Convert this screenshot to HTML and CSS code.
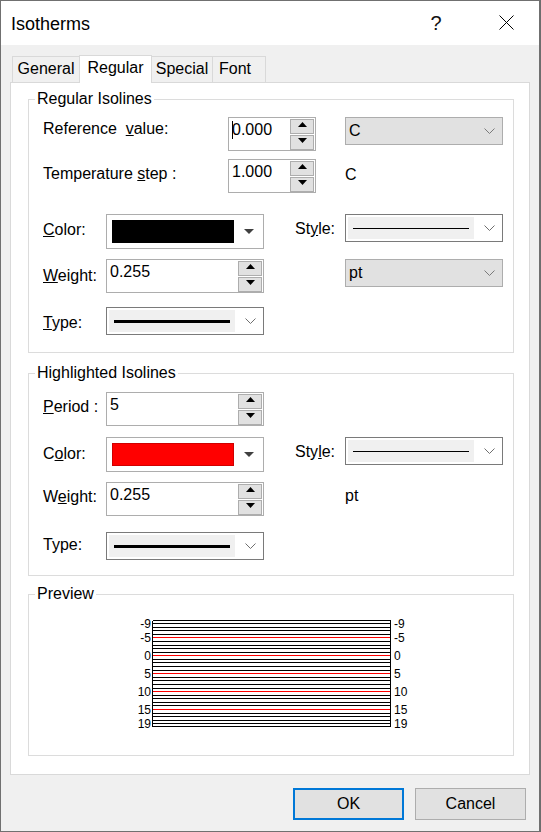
FILE: index.html
```html
<!DOCTYPE html>
<html>
<head>
<meta charset="utf-8">
<title>Isotherms</title>
<link rel="stylesheet" href="styles.css">
</head>
<body>
<div class="window">
  <div class="titlebar">
    <div class="title">Isotherms</div>
    <div class="help">?</div>
    <div class="close"><svg width="15" height="15" viewBox="0 0 15 15"><path d="M0.5 0.5 L14.5 14.5 M14.5 0.5 L0.5 14.5" stroke="#000" stroke-width="1" fill="none"/></svg></div>
  </div>
  <div class="body">
    <div class="tabs">
      <div class="tab">General</div>
      <div class="tab active">Regular</div>
      <div class="tab">Special</div>
      <div class="tab tab-font">Font</div>
    </div>
    <div class="panel">
      <!-- Regular Isolines -->
      <div class="group g1">
        <div class="group-title">Regular Isolines</div>
        <div class="row mt9">
          <div class="lbl lbl-wide o3">Reference&nbsp; <u>v</u>alue:</div>
          <div class="spin narrow">
            <div class="val"><span class="caret"></span>0.000</div>
            <div class="btns">
              <div class="sbtn"><svg width="9" height="5" viewBox="0 0 9 5"><polygon points="0,5 4.5,0 9,5" fill="#000"/></svg></div>
              <div class="sbtn"><svg width="9" height="5" viewBox="0 0 9 5"><polygon points="0,0 9,0 4.5,5" fill="#000"/></svg></div>
            </div>
          </div>
          <div class="dcombo after-narrow"><span>C</span><svg class="chev" width="11" height="6" viewBox="0 0 11 6"><polyline points="0.5,0.5 5.5,5.5 10.5,0.5" fill="none" stroke="#7a7a7a" stroke-width="1"/></svg></div>
        </div>
        <div class="row mt8">
          <div class="lbl lbl-wide o6">Temperature <u>s</u>tep :</div>
          <div class="spin narrow">
            <div class="val">1.000</div>
            <div class="btns">
              <div class="sbtn"><svg width="9" height="5" viewBox="0 0 9 5"><polygon points="0,5 4.5,0 9,5" fill="#000"/></svg></div>
              <div class="sbtn"><svg width="9" height="5" viewBox="0 0 9 5"><polygon points="0,0 9,0 4.5,5" fill="#000"/></svg></div>
            </div>
          </div>
          <div class="unit after-narrow o7">C</div>
        </div>
        <div class="row mt21">
          <div class="lbl o7"><u>C</u>olor:</div>
          <div class="colorbox">
            <div class="swatch black"></div>
            <div class="carrow"><svg width="10" height="5" viewBox="0 0 10 5"><polygon points="0,0 10,0 5,5" fill="#404040"/></svg></div>
          </div>
          <div class="lbl2 o6">St<u>y</u>le:</div>
          <div class="combo wide">
            <div class="linebox"><div class="ln thin"></div></div>
            <div class="chevbox"><svg width="11" height="6" viewBox="0 0 11 6"><polyline points="0.5,0.5 5.5,5.5 10.5,0.5" fill="none" stroke="#6e6e6e" stroke-width="1"/></svg></div>
          </div>
        </div>
        <div class="row mt10">
          <div class="lbl o8"><u>W</u>eight:</div>
          <div class="spin">
            <div class="val">0.255</div>
            <div class="btns">
              <div class="sbtn"><svg width="9" height="5" viewBox="0 0 9 5"><polygon points="0,5 4.5,0 9,5" fill="#000"/></svg></div>
              <div class="sbtn"><svg width="9" height="5" viewBox="0 0 9 5"><polygon points="0,0 9,0 4.5,5" fill="#000"/></svg></div>
            </div>
          </div>
          <div class="dcombo after-field"><span>pt</span><svg class="chev" width="11" height="6" viewBox="0 0 11 6"><polyline points="0.5,0.5 5.5,5.5 10.5,0.5" fill="none" stroke="#7a7a7a" stroke-width="1"/></svg></div>
        </div>
        <div class="row mt14">
          <div class="lbl o7"><u>T</u>ype:</div>
          <div class="combo">
            <div class="linebox"><div class="ln thick"></div></div>
            <div class="chevbox"><svg width="11" height="6" viewBox="0 0 11 6"><polyline points="0.5,0.5 5.5,5.5 10.5,0.5" fill="none" stroke="#6e6e6e" stroke-width="1"/></svg></div>
          </div>
        </div>
      </div>

      <!-- Highlighted Isolines -->
      <div class="group g2">
        <div class="group-title">Highlighted Isolines</div>
        <div class="row mt10">
          <div class="lbl o6"><u>P</u>eriod :</div>
          <div class="spin">
            <div class="val">5</div>
            <div class="btns">
              <div class="sbtn"><svg width="9" height="5" viewBox="0 0 9 5"><polygon points="0,5 4.5,0 9,5" fill="#000"/></svg></div>
              <div class="sbtn"><svg width="9" height="5" viewBox="0 0 9 5"><polygon points="0,0 9,0 4.5,5" fill="#000"/></svg></div>
            </div>
          </div>
        </div>
        <div class="row mt11">
          <div class="lbl o8">C<u>o</u>lor:</div>
          <div class="colorbox">
            <div class="swatch red"></div>
            <div class="carrow"><svg width="10" height="5" viewBox="0 0 10 5"><polygon points="0,0 10,0 5,5" fill="#404040"/></svg></div>
          </div>
          <div class="lbl2 o6">Sty<u>l</u>e:</div>
          <div class="combo wide">
            <div class="linebox"><div class="ln thin"></div></div>
            <div class="chevbox"><svg width="11" height="6" viewBox="0 0 11 6"><polyline points="0.5,0.5 5.5,5.5 10.5,0.5" fill="none" stroke="#6e6e6e" stroke-width="1"/></svg></div>
          </div>
        </div>
        <div class="row mt10">
          <div class="lbl o6">W<u>e</u>ight:</div>
          <div class="spin">
            <div class="val">0.255</div>
            <div class="btns">
              <div class="sbtn"><svg width="9" height="5" viewBox="0 0 9 5"><polygon points="0,5 4.5,0 9,5" fill="#000"/></svg></div>
              <div class="sbtn"><svg width="9" height="5" viewBox="0 0 9 5"><polygon points="0,0 9,0 4.5,5" fill="#000"/></svg></div>
            </div>
          </div>
          <div class="unit after-field o5">pt</div>
        </div>
        <div class="row mt16">
          <div class="lbl o4">Type:</div>
          <div class="combo">
            <div class="linebox"><div class="ln thick"></div></div>
            <div class="chevbox"><svg width="11" height="6" viewBox="0 0 11 6"><polyline points="0.5,0.5 5.5,5.5 10.5,0.5" fill="none" stroke="#6e6e6e" stroke-width="1"/></svg></div>
          </div>
        </div>
      </div>

      <!-- Preview -->
      <div class="group g3">
        <div class="group-title">Preview</div>
        <svg class="preview" width="290" height="123" viewBox="0 0 290 123">
          <g stroke="#000" stroke-width="1" shape-rendering="crispEdges" fill="none">
            <line x1="26.5" y1="8.5" x2="264.5" y2="8.5"/>
            <line x1="26.5" y1="114.5" x2="264.5" y2="114.5"/>
            <line x1="26.5" y1="8.5" x2="26.5" y2="114.5"/>
            <line x1="264.5" y1="8.5" x2="264.5" y2="114.5"/>
            <line x1="26.5" y1="11.5" x2="264.5" y2="11.5"/>
            <line x1="26.5" y1="15.5" x2="264.5" y2="15.5"/>
            <line x1="26.5" y1="18.5" x2="264.5" y2="18.5"/>
            <line x1="26.5" y1="22.5" x2="264.5" y2="22.5"/>
            <line x1="26.5" y1="29.5" x2="264.5" y2="29.5"/>
            <line x1="26.5" y1="33.5" x2="264.5" y2="33.5"/>
            <line x1="26.5" y1="36.5" x2="264.5" y2="36.5"/>
            <line x1="26.5" y1="40.5" x2="264.5" y2="40.5"/>
            <line x1="26.5" y1="47.5" x2="264.5" y2="47.5"/>
            <line x1="26.5" y1="50.5" x2="264.5" y2="50.5"/>
            <line x1="26.5" y1="54.5" x2="264.5" y2="54.5"/>
            <line x1="26.5" y1="58.5" x2="264.5" y2="58.5"/>
            <line x1="26.5" y1="65.5" x2="264.5" y2="65.5"/>
            <line x1="26.5" y1="68.5" x2="264.5" y2="68.5"/>
            <line x1="26.5" y1="72.5" x2="264.5" y2="72.5"/>
            <line x1="26.5" y1="76.5" x2="264.5" y2="76.5"/>
            <line x1="26.5" y1="83.5" x2="264.5" y2="83.5"/>
            <line x1="26.5" y1="86.5" x2="264.5" y2="86.5"/>
            <line x1="26.5" y1="90.5" x2="264.5" y2="90.5"/>
            <line x1="26.5" y1="93.5" x2="264.5" y2="93.5"/>
            <line x1="26.5" y1="101.5" x2="264.5" y2="101.5"/>
            <line x1="26.5" y1="104.5" x2="264.5" y2="104.5"/>
            <line x1="26.5" y1="108.5" x2="264.5" y2="108.5"/>
            <line x1="26.5" y1="111.5" x2="264.5" y2="111.5"/>
          </g>
          <g stroke="#ff0000" stroke-width="1" shape-rendering="crispEdges">
            <line x1="27" y1="25.5" x2="264" y2="25.5"/>
            <line x1="27" y1="43.5" x2="264" y2="43.5"/>
            <line x1="27" y1="61.5" x2="264" y2="61.5"/>
            <line x1="27" y1="79.5" x2="264" y2="79.5"/>
            <line x1="27" y1="97.5" x2="264" y2="97.5"/>
          </g>
          <g class="plabels" text-anchor="end">
            <text x="25" y="15.5">-9</text>
            <text x="25" y="29.5">-5</text>
            <text x="25" y="47.5">0</text>
            <text x="25" y="65.5">5</text>
            <text x="25" y="83.5">10</text>
            <text x="25" y="101.5">15</text>
            <text x="25" y="115.5">19</text>
          </g>
          <g class="plabels" text-anchor="start">
            <text x="268" y="15.5">-9</text>
            <text x="268" y="29.5">-5</text>
            <text x="268" y="47.5">0</text>
            <text x="268" y="65.5">5</text>
            <text x="268" y="83.5">10</text>
            <text x="268" y="101.5">15</text>
            <text x="268" y="115.5">19</text>
          </g>
        </svg>
      </div>
    </div>
    <div class="btnrow">
      <div class="pbtn default">OK</div>
      <div class="pbtn">Cancel</div>
    </div>
  </div>
</div>
</body>
</html>
```
FILE: styles.css
```css
* { box-sizing: border-box; }
html, body { margin: 0; padding: 0; }
body {
  background: #6d6d6d;
  font-family: "Liberation Sans", Arial, sans-serif;
  font-size: 16px;
  line-height: 18px;
  color: #000;
}
.window {
  width: 540px;
  height: 832px;
  border: 1px solid #707070;
  background: #f0f0f0;
  display: flex;
  flex-direction: column;
}
/* title bar */
.titlebar {
  height: 44px;
  flex: none;
  background: #fff;
  display: flex;
  align-items: flex-start;
}
.title {
  flex: 1;
  margin-top: 14px;
  padding-left: 10px;
  font-size: 18px;
  line-height: 18px;
}
.help {
  width: 46px;
  margin-top: 12px;
  text-align: center;
  font-size: 20px;
  line-height: 20px;
  color: #111;
}
.close {
  width: 46px;
  margin-left: 24px;
  margin-right: 10px;
  margin-top: 14px;
  display: flex;
  justify-content: center;
}
.close svg { display: block; }

/* body */
.body {
  flex: 1;
  padding: 10px 0 0 9px;
}
.tabs {
  display: flex;
  align-items: flex-end;
  height: 28px;
  margin-left: 2px;
  margin-bottom: -1px;
  position: relative;
  z-index: 1;
}
.tab {
  height: 26px;
  margin-bottom: 1px;
  border: 1px solid #d9d9d9;
  border-bottom: none;
  background: #f0f0f0;
  padding-top: 3px;
  text-align: center;
  margin-left: -1px;
}
.tab:first-child { margin-left: 0; width: 68px; }
.tab.active {
  height: 28px;
  margin-bottom: 0;
  background: #fff;
  width: 73px;
  position: relative;
  z-index: 2;
  padding-top: 3px;
}
.tab:nth-child(3) { width: 62px; }
.tab-font { width: 54px; text-align: left; padding-left: 6px; }

.panel {
  width: 520px;
  height: 693px;
  background: #fff;
  border: 1px solid #d9d9d9;
  padding: 16px 0 0 17px;
}

/* group boxes */
.group {
  width: 486px;
  border: 1px solid #dcdcdc;
  display: flex;
  flex-direction: column;
}
.g1 { padding-bottom: 17px; }
.g2 { margin-top: 20px; padding-bottom: 15px; }
.g3 { margin-top: 18px; padding-bottom: 20px; }
.group-title {
  align-self: flex-start;
  height: 18px;
  margin: -10px 0 0 6px;
  padding: 0 2px;
  background: #fff;
  white-space: nowrap;
}

/* rows */
.row {
  display: flex;
  align-items: flex-start;
  padding-left: 14px;
  white-space: nowrap;
}
.mt8 { margin-top: 8px; }
.mt9 { margin-top: 9px; }
.mt10 { margin-top: 10px; }
.mt11 { margin-top: 11px; }
.mt14 { margin-top: 14px; }
.mt16 { margin-top: 16px; }
.mt21 { margin-top: 21px; }
.o3 { padding-top: 3px; }
.o4 { padding-top: 4px; }
.o5 { padding-top: 5px; }
.o6 { padding-top: 6px; }
.o7 { padding-top: 7px; }
.o8 { padding-top: 8px; }

.lbl { width: 63px; flex: none; }
.lbl-wide { width: 185px; }
.lbl2 { width: 50px; margin-left: 31px; flex: none; }
.after-narrow { margin-left: 29px; }
.after-field { margin-left: 81px; }
.unit { flex: none; }

/* spin edit */
.spin {
  width: 158px;
  height: 34px;
  flex: none;
  border: 1px solid #adadad;
  background: #fff;
  display: flex;
}
.spin.narrow { width: 88px; }
.spin .val {
  flex: 1;
  padding: 3px 0 0 3px;
  display: flex;
  align-items: flex-start;
}
.caret {
  display: inline-block;
  width: 1px;
  height: 18px;
  margin-top: 0;
  margin-right: -1px;
  background: #000;
}
.btns {
  display: flex;
  flex-direction: column;
  gap: 1px;
  padding-top: 1px;
  margin-right: 1px;
}
.sbtn {
  width: 24px;
  height: 15px;
  border: 1px solid #adadad;
  background: #e1e1e1;
  display: flex;
  justify-content: center;
  align-items: flex-start;
  padding-top: 2px;
}
.sbtn svg { display: block; }

/* color picker combo */
.colorbox {
  width: 158px;
  height: 35px;
  flex: none;
  border: 1px solid #adadad;
  background: #fff;
  display: flex;
  align-items: flex-start;
  padding: 5px 0 0 5px;
}
.swatch { width: 122px; height: 23px; flex: none; }
.swatch.black { background: #000; }
.swatch.red { background: #ff0000; border: 1px solid #d00000; }
.carrow {
  flex: 1;
  display: flex;
  justify-content: center;
  padding-top: 9px;
}
.carrow svg { display: block; }

/* line style combos */
.combo {
  width: 158px;
  height: 28px;
  flex: none;
  border: 1px solid #7a7a7a;
  background: #fff;
  padding: 2px;
  display: flex;
}
.linebox {
  width: 126px;
  background: #f0f0f0;
  display: flex;
  align-items: center;
  justify-content: center;
}
.ln { width: 116px; background: #000; }
.ln.thin { height: 1px; }
.ln.thick { height: 3px; }
.chevbox {
  flex: 1;
  display: flex;
  align-items: center;
  justify-content: center;
  padding-left: 4px;
}
.chevbox svg { display: block; }

/* disabled unit combos */
.dcombo {
  width: 158px;
  height: 28px;
  flex: none;
  border: 1px solid #adadad;
  background: #e1e1e1;
  display: flex;
  align-items: center;
  padding-left: 3px;
}
.dcombo .chev { margin-left: auto; margin-right: 7px; display: block; }

/* preview */
.preview {
  display: block;
  margin: 9px auto 0;
}
.plabels text {
  font-family: "Liberation Sans", Arial, sans-serif;
  font-size: 12px;
  fill: #000;
}

/* buttons */
.btnrow {
  display: flex;
  justify-content: flex-end;
  gap: 11px;
  padding-right: 13px;
  margin-top: 13px;
}
.pbtn {
  width: 111px;
  height: 32px;
  border: 1px solid #adadad;
  background: #e1e1e1;
  display: flex;
  align-items: center;
  justify-content: center;
}
.pbtn.default { border: 2px solid #0078d7; }
```
